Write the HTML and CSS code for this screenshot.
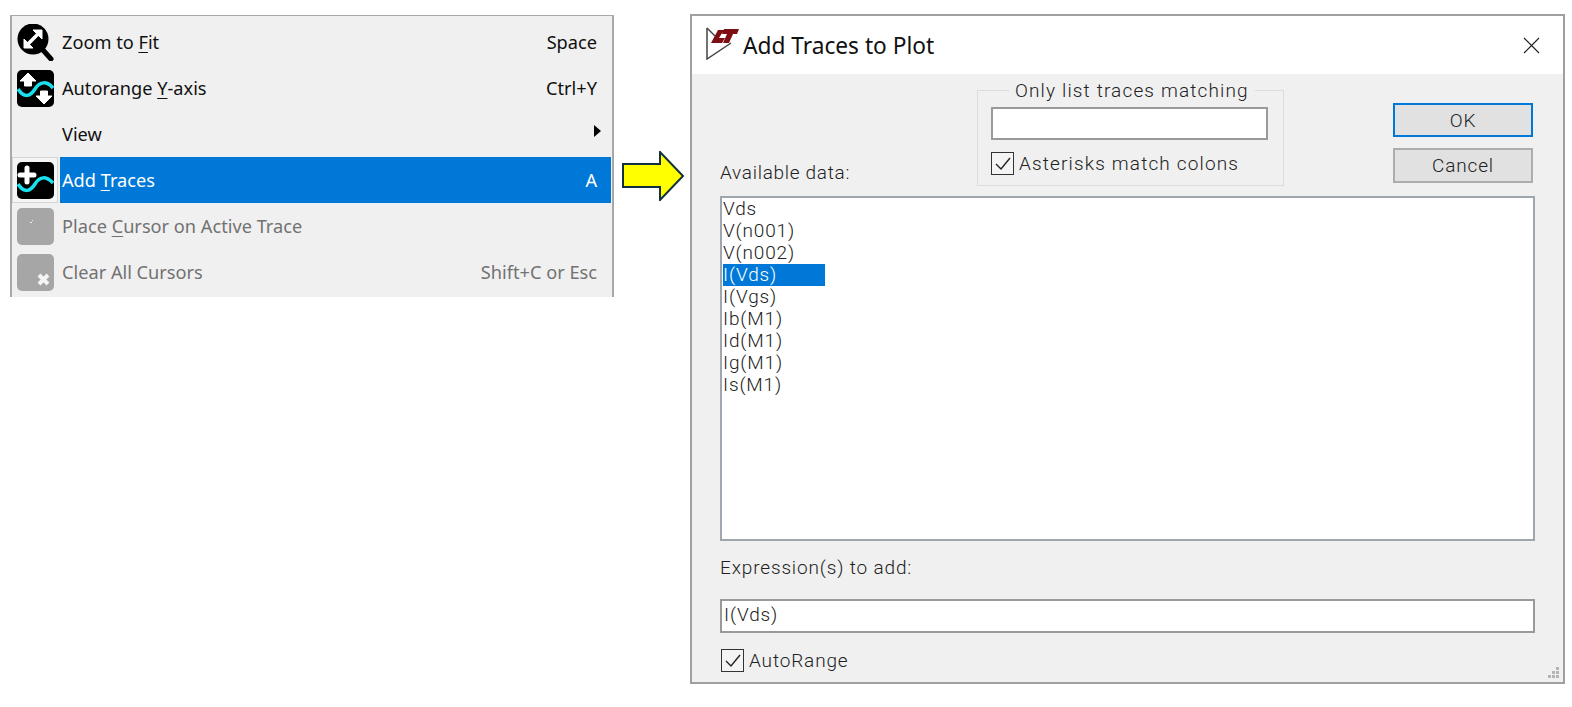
FILE: index.html
```html
<!DOCTYPE html>
<html lang="en">
<head>
<meta charset="utf-8">
<title>Add Traces to Plot</title>
<link rel="stylesheet" href="styles.css">
</head>
<body>
<div class="stage">
  <nav class="menu">
    <div class="row">
      <span class="ico"><svg width="37" height="37" viewBox="0 0 37 37"><circle cx="16" cy="15" r="15.5" fill="#000"/><path d="M26 26L34 35" stroke="#000" stroke-width="5" stroke-linecap="round"/><path d="M9 22L23 8" stroke="#fff" stroke-width="3.5"/><path d="M16 6H25V15Z M7 15V24H16Z" fill="#fff" stroke="#fff" stroke-linejoin="round"/></svg></span>
      <span class="lbl">Zoom to <u>F</u>it</span><span class="key">Space</span>
    </div>
    <div class="row">
      <span class="ico"><svg width="37" height="37" viewBox="0 0 37 37"><rect width="37" height="37" rx="5" fill="#000"/><path d="M11 3L19 11H14.5V16H7.500V11H3Z M27 34L19 26H23.500V21H30.500V26H35Z" fill="#fff" stroke="#fff" stroke-linejoin="round"/><path d="M1 19C7 28 13 27 18 19C23 11 30 11 36 18" fill="none" stroke="#000" stroke-width="6"/><path d="M1 19C7 28 13 27 18 19C23 11 30 11 36 18" fill="none" stroke="#19e0ee" stroke-width="3.500"/></svg></span>
      <span class="lbl">Autorange <u>Y</u>-axis</span><span class="key">Ctrl+Y</span>
    </div>
    <div class="row">
      <span class="ico"></span>
      <span class="lbl">View</span><span class="key"><svg class="caret" width="7" height="12" viewBox="0 0 7 12"><path d="M0 0L7 6L0 12Z" fill="#000"/></svg></span>
    </div>
    <div class="row sel">
      <span class="ico"><svg width="37" height="37" viewBox="0 0 37 37"><rect width="37" height="37" rx="5" fill="#000"/><path d="M10 6V20M3 13H17" stroke="#fff" stroke-width="5" stroke-linecap="round"/><path d="M1 22C7 31 13 30 18 22C23 14 29 14 36 21" fill="none" stroke="#19e0ee" stroke-width="3.5"/></svg></span>
      <span class="lbl">Add <u>T</u>races</span><span class="key">A</span>
    </div>
    <div class="row off">
      <span class="ico"><svg width="37" height="37" viewBox="0 0 37 37"><rect width="37" height="37" rx="5" fill="#a6a6a6"/><path d="M13 14h2v1h-2zM15 12h1v1h-1z" fill="#eee"/></svg></span>
      <span class="lbl">Place <u>C</u>ursor on Active Trace</span>
    </div>
    <div class="row off">
      <span class="ico"><svg width="37" height="37" viewBox="0 0 37 37"><rect width="37" height="37" rx="5" fill="#a6a6a6"/><path d="M22 21L31 30M31 21L22 30" stroke="#f4f4f4" stroke-width="4"/></svg></span>
      <span class="lbl">Clear All Cursors</span><span class="key">Shift+C or Esc</span>
    </div>
  </nav>

  <svg class="arrow" width="64" height="50" viewBox="0 0 64 50"><path d="M2 13H39V1L62 25L39 49V36H2Z" fill="#ffff00" stroke="#12303f" stroke-width="2"/></svg>

  <section class="dialog">
    <header class="title">
      <svg class="logo" width="34" height="33" viewBox="0 0 34 33"><path d="M1 1V32L25 16" fill="none" stroke="#444" stroke-width="1.5"/><path d="M1 1L9 9" stroke="#444" stroke-width="1.4"/><path d="M5 16L12 3H18L13 11H19L16 16Z M18 2H33L31 7H27L23 16H17L21 7H16Z" fill="#7d0f14"/></svg>
      <h1>Add Traces to Plot</h1>
      <svg class="close" width="17" height="17" viewBox="0 0 17 17"><path d="M1 1L16 16M16 1L1 16" stroke="#222" stroke-width="1.2"/></svg>
    </header>
    <div class="body">
      <div class="top">
        <label class="avail">Available data:</label>
        <div class="group">
          <span class="legend">Only list traces matching</span>
          <div class="field small"></div>
          <div class="check">
            <span class="box"><svg width="22" height="22" viewBox="0 0 22 22"><path d="M4 11L9 16L18 5" fill="none" stroke="#222" stroke-width="1.4"/></svg></span>
            <span>Asterisks match colons</span>
          </div>
        </div>
        <div class="buttons">
          <button class="btn default">OK</button>
          <button class="btn">Cancel</button>
        </div>
      </div>
      <div class="list">
        <div>Vds</div>
        <div>V(n001)</div>
        <div>V(n002)</div>
        <div class="on">I(Vds)</div>
        <div>I(Vgs)</div>
        <div>Ib(M1)</div>
        <div>Id(M1)</div>
        <div>Ig(M1)</div>
        <div>Is(M1)</div>
      </div>
      <label class="expr">Expression(s) to add:</label>
      <div class="field wide">I(Vds)</div>
      <div class="check auto">
        <span class="box"><svg width="22" height="22" viewBox="0 0 22 22"><path d="M4 11L9 16L18 5" fill="none" stroke="#222" stroke-width="1.4"/></svg></span>
        <span>AutoRange</span>
      </div>
      <svg class="grip" width="12" height="12" viewBox="0 0 12 12"><path d="M8 0h3v3H8zM4 4h3v3H4zM8 4h3v3H8zM0 8h3v3H0zM4 8h3v3H4zM8 8h3v3H8z" fill="#b4b4b4"/></svg>
    </div>
  </section>
</div>
</body>
</html>
```

FILE: styles.css
```css
* { box-sizing: border-box; }
html, body { margin: 0; padding: 0; background: #fff; }
body { width: 1572px; height: 707px; overflow: hidden; }
.stage { display: flex; align-items: flex-start; padding-left: 10px; }

.menu {
  width: 604px; height: 282px; margin-top: 15px; padding: 3px 1px 0 0;
  background: #f0f0f0; border: 1px solid #a8a8a8; border-width: 1px 2px 0 2px;
  font: 18.2px "Noto Sans", "Open Sans", sans-serif; color: #111;
}
.row { display: flex; align-items: center; height: 46px; }
.ico { width: 46px; height: 46px; margin-right: 2px; display: flex; align-items: center; justify-content: center; flex: none; }
.lbl { flex: 1; padding-left: 2px; }
.key { padding-right: 14px; }
.off .lbl, .off .key { padding-bottom: 1px; }
.caret { display: block; margin-top: -6px; margin-right: -4px; }
u { text-underline-offset: 3px; text-decoration-thickness: 1px; }
.sel .ico { background: #f5f5f5; border: 1px solid #d4d4d4; }
.sel .lbl, .sel .key { background: #0078d7; color: #fff; height: 46px; line-height: 46px; }
.off { color: #727272; }

.arrow { margin: 151px 0 0 7px; flex: none; }

.dialog {
  width: 875px; height: 670px; margin: 14px 0 0 5px;
  border: 2px solid #a0a0a0; background: #f0f0f0; display: flex; flex-direction: column;
  font: 300 19px Roboto, "Liberation Sans", sans-serif; letter-spacing: .85px; color: #222;
}
.title { height: 58px; background: #fff; display: flex; align-items: center; padding: 0 23px 0 14px; flex: none; }
.logo { flex: none; margin-bottom: 3px; }
.title h1 { font: 400 22.7px "Noto Sans", sans-serif; letter-spacing: 0; margin: 0 0 0 3px; flex: 1; color: #111; }
.close { flex: none; }
.body { position: relative; flex: 1; padding: 16px 28px 0 28px; }
.top { display: flex; align-items: flex-start; height: 106px; }
.avail { width: 257px; flex: none; padding-top: 71px; letter-spacing: .7px; }
.group { width: 307px; height: 96px; flex: none; border: 1px solid #dcdcdc; position: relative; padding: 16px 15px 0 13px; letter-spacing: 1.15px; }
.legend { position: absolute; top: -11px; left: 31px; padding: 0 6px; background: #f0f0f0; line-height: 22px; white-space: nowrap; }
.field { background: #fff; border: 2px solid #9a9a9a; }
.small { height: 33px; width: 277px; }
.check { display: flex; align-items: center; gap: 5px; margin-top: 12px; }
.box { width: 23px; height: 23px; border: 1px solid #333; background: #f4f4f4; display: block; flex: none; }
.box svg { display: block; }
.buttons { margin-left: 109px; margin-top: 13px; display: flex; flex-direction: column; gap: 11px; flex: none; }
.btn { width: 140px; height: 35px; background: #e1e1e1; border: 2px solid #adadad; font: inherit; letter-spacing: inherit; color: #222; padding: 0; }
.default { border-color: #0078d7; height: 34px; }
.list { background: #fff; border: 2px solid #a0a6ae; height: 345px; width: 815px; padding: 0 1px; line-height: 22px; }
.list .on { background: #0078d7; color: #fff; width: 102px; }
.expr { display: block; margin-top: 15px; line-height: 24px; }
.wide { width: 815px; height: 34px; margin-top: 19px; line-height: 27px; padding-left: 2px; }
.auto { margin-top: 16px; padding-left: 1px; }
.grip { position: absolute; right: 3px; bottom: 3px; }
```
